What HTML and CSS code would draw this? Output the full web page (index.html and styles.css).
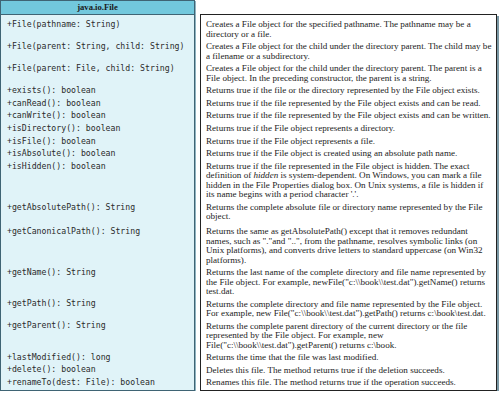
FILE: index.html
```html
<!DOCTYPE html>
<html lang="en">
<head>
    <meta charset="UTF-8">
    <meta name="viewport" content="width=device-width, initial-scale=1.0">
    <title>java.io.File</title>
    <link rel="stylesheet" href="styles.css">
</head>
<body>
    <div class="figure">
        <!-- UML class box -->
        <div class="uml">
            <div class="uml-title">java.io.File</div>
            <ul class="members">
                <li class="n2">+File(pathname: String)</li>
                <li class="n2">+File(parent: String, child: String)</li>
                <li class="n2">+File(parent: File, child: String)</li>
                <li>+exists(): boolean</li>
                <li>+canRead(): boolean</li>
                <li>+canWrite(): boolean</li>
                <li>+isDirectory(): boolean</li>
                <li>+isFile(): boolean</li>
                <li>+isAbsolute(): boolean</li>
                <li class="n4">+isHidden(): boolean</li>
                <li class="n2 wide">+getAbsolutePath(): String</li>
                <li class="n4">+getCanonicalPath(): String</li>
                <li class="n3">+getName(): String</li>
                <li class="n2">+getPath(): String</li>
                <li class="n3">+getParent(): String</li>
                <li>+lastModified(): long</li>
                <li>+delete(): boolean</li>
                <li>+renameTo(dest: File): boolean</li>
            </ul>
        </div>

        <!-- Descriptions -->
        <div class="notes">
            <p>Creates a File object for the specified pathname. The pathname may be a<br>directory or a file.</p>
            <p>Creates a File object for the child under the directory parent. The child may be<br>a filename or a subdirectory.</p>
            <p>Creates a File object for the child under the directory parent. The parent is a<br>File object. In the preceding constructor, the parent is a string.</p>
            <p>Returns true if the file or the directory represented by the File object exists.</p>
            <p>Returns true if the file represented by the File object exists and can be read.</p>
            <p>Returns true if the file represented by the File object exists and can be written.</p>
            <p>Returns true if the File object represents a directory.</p>
            <p>Returns true if the File object represents a file.</p>
            <p>Returns true if the File object is created using an absolute path name.</p>
            <p>Returns true if the file represented in the File object is hidden. The exact<br>definition of <em>hidden</em> is system-dependent. On Windows, you can mark a file<br>hidden in the File Properties dialog box. On Unix systems, a file is hidden if<br>its name begins with a period character '.'.</p>
            <p class="wide">Returns the complete absolute file or directory name represented by the File<br>object.</p>
            <p>Returns the same as getAbsolutePath() except that it removes redundant<br>names, such as "."and "..", from the pathname, resolves symbolic links (on<br>Unix platforms), and converts drive letters to standard uppercase (on Win32<br>platforms).</p>
            <p>Returns the last name of the complete directory and file name represented by<br>the File object. For example, newFile("c:\\book\\test.dat").getName() returns<br>test.dat.</p>
            <p>Returns the complete directory and file name represented by the File object.<br>For example, new File("c:\\book\\test.dat").getPath() returns c:\book\test.dat.</p>
            <p>Returns the complete parent directory of the current directory or the file<br>represented by the File object. For example, new<br>File("c:\\book\\test.dat").getParent() returns c:\book.</p>
            <p>Returns the time that the file was last modified.</p>
            <p>Deletes this file. The method returns true if the deletion succeeds.</p>
            <p>Renames this file. The method returns true if the operation succeeds.</p>
        </div>
    </div>
</body>
</html>
```

FILE: styles.css
```css
body {
    background-color: #ffffff;
    margin: 0;
    padding: 0;
}

.figure {
    display: flex;
    align-items: flex-start;
    gap: 5px;
}

/* UML box */
.uml {
    width: 193px;
    height: 389px;
    background-color: #e0f3f8;
    border: 1px solid #3f6474;
    box-shadow: 1px 1px 0 #8fb3c0;
}

.uml-title {
    height: 13px;
    line-height: 13px;
    background-color: #72c8dd;
    border-bottom: 1px solid #3f6474;
    text-align: center;
    font-family: "Liberation Serif", serif;
    font-weight: bold;
    font-size: 8.6px;
    color: #1a1a1a;
}

.members {
    list-style: none;
    margin: 0;
    padding: 5.3px 0 0 6px;
    font-family: "DejaVu Sans Mono", monospace;
    font-size: 8.2px;
    color: #2a2a2a;
}

.members li,
.notes p {
    line-height: 9.4px;
    height: 9.4px;
    padding-bottom: 3.2px;
    margin: 0;
    white-space: nowrap;
}

.members li.n2 { height: 18.8px; }
.members li.n3 { height: 28.2px; }
.members li.n4 { height: 37.6px; }

.members li.wide,
.notes p.wide {
    padding-bottom: 6px;
}

/* Description box */
.notes {
    margin-top: 14px;
    width: 288px;
    height: 370px;
    padding: 5.3px 2px 0 5px;
    background-color: #ffffff;
    border: 1px solid #222;
    box-shadow: 2px 2px 0 #7a98a4;
    font-family: "Liberation Serif", serif;
    font-size: 9.1px;
    color: #222;
}

.notes p {
    height: auto;
}
```
